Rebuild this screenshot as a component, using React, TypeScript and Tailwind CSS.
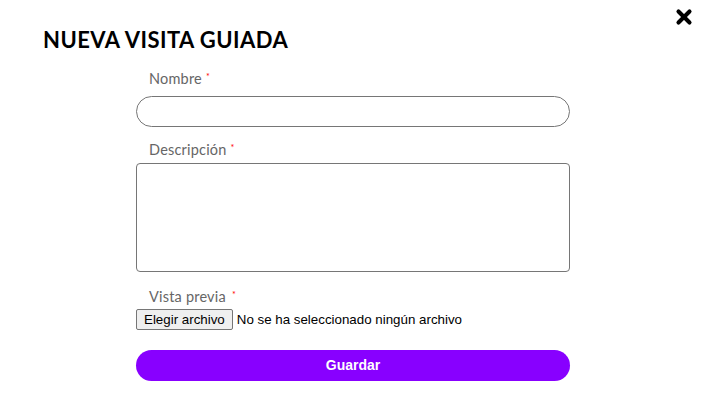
import { X } from 'lucide-react';

function Label({ text, gap = 'ml-[4px]' }: { text: string; gap?: string }) {
  return (
    <div className="pl-[13px] text-[14.5px] leading-[20px] tracking-[0.2px] text-[#666666]">
      {text}
      <span className={`${gap} relative -top-[4px] text-[9px] text-[#ff0000]`}>*</span>
    </div>
  );
}

export default function App() {
  return (
    <div className="relative h-[406px] w-[701px] bg-white font-['Lato',sans-serif]">
      <button className="absolute right-[6px] top-[6px] text-black">
        <X size={22} strokeWidth={4.5} />
      </button>
      <h1 className="pl-[43px] pt-[27px] text-[22px] font-bold leading-[26px] tracking-[0.45px] text-black">
        NUEVA VISITA GUIADA
      </h1>
      <form className="ml-[136px] mt-[16px] w-[434px]">
        <Label text="Nombre" />
        <input className="mt-[5px] block h-[31px] w-full rounded-full border border-[#767676] px-3 outline-none" />
        <div className="mt-[13px]">
          <Label text="Descripción" />
        </div>
        <textarea className="mt-[1px] block h-[109px] w-full resize-none rounded-[4px] border border-[#767676] outline-none" />
        <div className="mt-[15px]">
          <Label text="Vista previa" gap="ml-[6px]" />
        </div>
        <div className="mt-0 flex items-center font-['Liberation_Sans',Arial,sans-serif] text-[13.33px] text-black">
          <span className="flex h-[21px] items-center rounded-[2px] border border-[#767676] bg-[#efefef] px-[7px]">
            Elegir archivo
          </span>
          <span className="ml-[4px]">No se ha seleccionado ningún archivo</span>
        </div>
        <button
          type="button"
          className="mt-[20px] block h-[31px] w-full rounded-full bg-[#8800ff] font-['Liberation_Sans',Arial,sans-serif] text-[14px] font-bold text-white"
        >
          Guardar
        </button>
      </form>
    </div>
  );
}
